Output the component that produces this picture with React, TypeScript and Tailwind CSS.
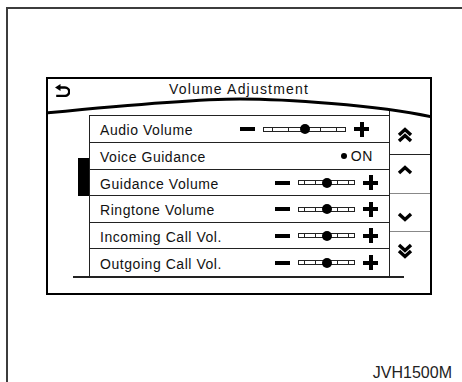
import React from "react";

type Row = {
    label: string;
    kind: "long" | "short" | "on";
    h: string;
};

const rows: Row[] = [
    { label: "Audio Volume", kind: "long", h: "h-[27px]" },
    { label: "Voice Guidance", kind: "on", h: "h-[27px]" },
    { label: "Guidance Volume", kind: "short", h: "h-[26px]" },
    { label: "Ringtone Volume", kind: "short", h: "h-[27px]" },
    { label: "Incoming Call Vol.", kind: "short", h: "h-[26px]" },
    { label: "Outgoing Call Vol.", kind: "short", h: "h-[27px]" },
];

function BackIcon() {
    return (
        <svg width="15" height="13" viewBox="0 0 15 13">
            <polygon points="0,3.5 5.5,0 5.5,7" fill="#000" />
            <path
                d="M5 3.5 H10 A4.2 4.2 0 0 1 10 11.9 H1.2"
                fill="none"
                stroke="#000"
                strokeWidth="2.4"
            />
        </svg>
    );
}

function Chevron({ up, double }: { up: boolean; double?: boolean }) {
    const one = up ? "2,8 8,2.5 14,8" : "2,2 8,7.5 14,2";
    return (
        <svg width="16" height={double ? 16 : 10} viewBox={double ? "0 0 16 16" : "0 0 16 10"}>
            <polyline points={one} fill="none" stroke="#000" strokeWidth="3.4" />
            {double && (
                <polyline
                    points={up ? "2,14 8,8.5 14,14" : "2,8 8,13.5 14,8"}
                    fill="none"
                    stroke="#000"
                    strokeWidth="3.4"
                />
            )}
        </svg>
    );
}

function Slider({ long }: { long: boolean }) {
    return (
        <div className={`flex items-center gap-[8px] ${long ? "pr-[20px]" : "pr-[11px]"}`}>
            <div className="w-[15px] h-[4px] bg-black" />
            <div className={`relative flex items-center ${long ? "w-[83px]" : "w-[57px]"}`}>
                <div className="w-full h-[5px] border border-[#222] flex justify-around items-center">
                    <div className="w-[1px] h-[3px] bg-[#222]" />
                    <div className="w-[1px] h-[3px] bg-[#222]" />
                    <div className="w-[1px] h-[3px] bg-transparent" />
                    <div className="w-[1px] h-[3px] bg-[#222]" />
                    <div className="w-[1px] h-[3px] bg-[#222]" />
                </div>
                <div className="absolute left-1/2 -translate-x-1/2 w-[10px] h-[10px] rounded-full bg-black" />
            </div>
            <div className="relative w-[15px] h-[15px] flex items-center justify-center">
                <div className="absolute w-[15px] h-[4px] bg-black" />
                <div className="absolute w-[4px] h-[15px] bg-black" />
            </div>
        </div>
    );
}

export default function App() {
    return (
        <div
            className="w-[462px] h-[382px] bg-white overflow-hidden text-[#111]"
            style={{ fontFamily: '"Liberation Sans", Arial, sans-serif' }}
        >
            <div className="ml-[6px] mt-[7px] h-[375px] border-l-2 border-t-2 border-[#3c3c3c] pl-[38px] pt-[68px]">
                <div className="relative w-[386px] h-[218px] border-2 border-black overflow-hidden">
                    {/* header */}
                    <div className="h-[36px]">
                        <div className="grid grid-cols-[40px_1fr_40px] h-[20px] items-center">
                            <div className="pl-[7px] pt-[2px]">
                                <BackIcon />
                            </div>
                            <div className="text-center text-[14px] tracking-[1.2px] leading-none">
                                Volume Adjustment
                            </div>
                            <div />
                        </div>
                    </div>

                    {/* body */}
                    <div className="flex">
                        <div className="w-[41px]">
                            <div className="ml-[30px] mt-[43px] w-[11px] h-[38px] bg-black" />
                        </div>

                        <div className="w-[300px] border-l border-t border-[#222]">
                            {rows.map((row, i) => (
                                <div
                                    key={row.label}
                                    className={`${row.h} flex items-center justify-between pl-[10px] ${i < rows.length - 1 ? "border-b border-[#222]" : ""}`}
                                >
                                    <span className="text-[14px] tracking-[0.55px] leading-none pt-[2px]">
                                        {row.label}
                                    </span>
                                    {row.kind === "on" ? (
                                        <div className="flex items-center gap-[4px] pr-[16px]">
                                            <div className="w-[6px] h-[6px] rounded-full bg-black" />
                                            <span className="text-[14px] tracking-[0.6px] leading-none">ON</span>
                                        </div>
                                    ) : (
                                        <Slider long={row.kind === "long"} />
                                    )}
                                </div>
                            ))}
                        </div>

                        <div className="w-[41px] -mt-[5px] border-l border-[#222] flex flex-col">
                            <div className="h-[45px] pl-[7px] pt-[17px] border-b border-[#222]">
                                <Chevron up double />
                            </div>
                            <div className="h-[39px] pl-[7px] pt-[10px] border-b border-[#888]">
                                <Chevron up />
                            </div>
                            <div className="h-[38px] pl-[7px] pt-[18px] border-b border-[#888]">
                                <Chevron up={false} />
                            </div>
                            <div className="h-[44px] pl-[7px] pt-[11px]">
                                <Chevron up={false} double />
                            </div>
                        </div>
                    </div>

                    <div className="ml-[25px] w-[331px] h-[2px] bg-[#222]" />

                    {/* curved header edge */}
                    <svg
                        className="absolute left-0 top-0"
                        width="382"
                        height="50"
                        viewBox="0 0 382 50"
                    >
                        <path
                            d="M-2 34 C80 26, 150 20, 192 20 S330 26, 384 38"
                            fill="none"
                            stroke="#000"
                            strokeWidth="3"
                        />
                    </svg>
                </div>

                <div className="mt-[70px] flex justify-end pr-[10px]">
                    <span className="text-[16px] leading-none text-[#222]">JVH1500M</span>
                </div>
            </div>
        </div>
    );
}
